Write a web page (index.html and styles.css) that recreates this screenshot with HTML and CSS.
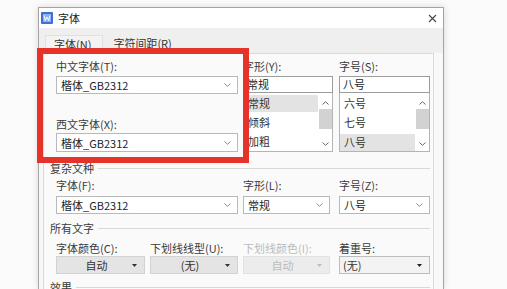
FILE: index.html
```html
<!DOCTYPE html>
<html lang="zh-CN">
<head>
<meta charset="utf-8">
<title>字体</title>
<link rel="stylesheet" href="styles.css">
</head>
<body>
<div class="dialog">
  <div class="titlebar">
    <svg class="app-icon" width="12" height="12" viewBox="0 0 12 12">
      <rect x="0" y="0" width="12" height="12" rx="1" fill="#3f6fd2"/>
      <rect x="2" y="2" width="8" height="8" fill="#8fb0ee"/>
      <path d="M3 3.5 L4.3 8.5 L6 5 L7.7 8.5 L9 3.5" fill="none" stroke="#fff" stroke-width="1"/>
    </svg>
    <span class="title">字体</span>
    <span class="close">
      <svg width="9" height="9" viewBox="0 0 9 9"><path d="M1 1 L8 8 M8 1 L1 8" stroke="#444" stroke-width="1.1"/></svg>
    </span>
  </div>
  <div class="tabstrip">
    <div class="tab active">字体(N)</div>
    <div class="tab">字符间距(R)</div>
  </div>
  <div class="panel">
    <div class="top-row">
      <div class="col-a">
        <div class="label">中文字体(T):</div>
        <div class="select sel-1"><span>楷体_GB2312</span><svg class="chev" width="7" height="4" viewBox="0 0 7 4"><path d="M0.5 0.5 L3.5 3.3 L6.5 0.5" fill="none" stroke="#8a8a8a" stroke-width="1"/></svg></div>
        <div class="label label-2">西文字体(X):</div>
        <div class="select sel-2"><span>楷体_GB2312</span><svg class="chev" width="7" height="4" viewBox="0 0 7 4"><path d="M0.5 0.5 L3.5 3.3 L6.5 0.5" fill="none" stroke="#8a8a8a" stroke-width="1"/></svg></div>
      </div>
      <div class="col-b">
        <div class="label">字形(Y):</div>
        <div class="input">常规</div>
        <div class="list">
          <div class="items">
            <div class="item selected">常规</div>
            <div class="item">倾斜</div>
            <div class="item">加粗</div>
          </div>
          <div class="scrollbar">
            <svg class="sarrow" width="7" height="4" viewBox="0 0 7 4"><path d="M0.5 3.5 L3.5 0.7 L6.5 3.5" fill="none" stroke="#666" stroke-width="1"/></svg>
            <div class="thumb"></div>
            <svg class="sarrow" width="7" height="4" viewBox="0 0 7 4"><path d="M0.5 0.5 L3.5 3.3 L6.5 0.5" fill="none" stroke="#666" stroke-width="1"/></svg>
          </div>
        </div>
      </div>
      <div class="col-c">
        <div class="label">字号(S):</div>
        <div class="input">八号</div>
        <div class="list">
          <div class="items">
            <div class="item">六号</div>
            <div class="item">七号</div>
            <div class="item selected">八号</div>
          </div>
          <div class="scrollbar">
            <svg class="sarrow" width="7" height="4" viewBox="0 0 7 4"><path d="M0.5 3.5 L3.5 0.7 L6.5 3.5" fill="none" stroke="#666" stroke-width="1"/></svg>
            <div class="thumb"></div>
            <svg class="sarrow" width="7" height="4" viewBox="0 0 7 4"><path d="M0.5 0.5 L3.5 3.3 L6.5 0.5" fill="none" stroke="#666" stroke-width="1"/></svg>
          </div>
        </div>
      </div>
    </div>

    <div class="section">复杂文种</div>
    <div class="mid-row">
      <div class="cell c1">
        <div class="label">字体(F):</div>
        <div class="select"><span>楷体_GB2312</span><svg class="chev" width="7" height="4" viewBox="0 0 7 4"><path d="M0.5 0.5 L3.5 3.3 L6.5 0.5" fill="none" stroke="#8a8a8a" stroke-width="1"/></svg></div>
      </div>
      <div class="cell c2">
        <div class="label">字形(L):</div>
        <div class="select"><span>常规</span><svg class="chev" width="7" height="4" viewBox="0 0 7 4"><path d="M0.5 0.5 L3.5 3.3 L6.5 0.5" fill="none" stroke="#8a8a8a" stroke-width="1"/></svg></div>
      </div>
      <div class="cell c3">
        <div class="label">字号(Z):</div>
        <div class="select"><span>八号</span><svg class="chev" width="7" height="4" viewBox="0 0 7 4"><path d="M0.5 0.5 L3.5 3.3 L6.5 0.5" fill="none" stroke="#8a8a8a" stroke-width="1"/></svg></div>
      </div>
    </div>

    <div class="section section-2">所有文字</div>
    <div class="btn-row">
      <div class="cell b1">
        <div class="label">字体颜色(C):</div>
        <div class="button"><span class="btext">自动</span><svg class="tri" width="5" height="3" viewBox="0 0 5 3"><path d="M0 0 H5 L2.5 3 Z" fill="#333"/></svg></div>
      </div>
      <div class="cell b2">
        <div class="label">下划线线型(U):</div>
        <div class="button"><span class="btext">(无)</span><svg class="tri" width="5" height="3" viewBox="0 0 5 3"><path d="M0 0 H5 L2.5 3 Z" fill="#333"/></svg></div>
      </div>
      <div class="cell b3">
        <div class="label disabled">下划线颜色(I):</div>
        <div class="button button-disabled"><span class="btext">自动</span><svg class="tri" width="5" height="3" viewBox="0 0 5 3"><path d="M0 0 H5 L2.5 3 Z" fill="#bdbdbd"/></svg></div>
      </div>
      <div class="cell b4">
        <div class="label">着重号:</div>
        <div class="button button-left"><span class="btext">(无)</span><svg class="tri" width="5" height="3" viewBox="0 0 5 3"><path d="M0 0 H5 L2.5 3 Z" fill="#222"/></svg></div>
      </div>
    </div>

    <div class="section section-3">效果</div>
  </div>
</div>
<div class="highlight"></div>
</body>
</html>
```
FILE: styles.css
```css
html, body {
  margin: 0;
  padding: 0;
}
body {
  width: 507px;
  height: 289px;
  overflow: hidden;
  position: relative;
  background: #fbfbfb;
  font-family: "Noto Sans CJK SC", "Noto Sans", sans-serif;
  font-size: 11px;
  color: #333;
}
.dialog {
  box-sizing: border-box;
  margin: 7px 0 0 38px;
  width: 406px;
  height: 282px;
  overflow: hidden;
  border: 1px solid #a4a4a4;
  border-bottom: none;
  background: #f8f8f8;
  box-shadow: 0 0 7px rgba(0, 0, 0, 0.14);
  display: flex;
  flex-direction: column;
}
.titlebar {
  height: 20px;
  background: #fff;
  display: flex;
  align-items: center;
  padding-left: 2px;
  flex-shrink: 0;
}
.app-icon {
  display: block;
  flex-shrink: 0;
}
.title {
  margin-left: 5px;
  color: #222;
  line-height: 14px;
}
.close {
  margin-left: auto;
  width: 20px;
  height: 20px;
  display: flex;
  align-items: center;
  justify-content: center;
  margin-right: 1px;
}
.close svg { display: block; }
.tabstrip {
  height: 25px;
  background: #efefef;
  display: flex;
  align-items: flex-end;
  padding-left: 6px;
  flex-shrink: 0;
}
.tab {
  height: 18px;
  line-height: 17px;
  padding: 0 10px 0 8px;
  color: #333;
  box-sizing: border-box;
}
.tab.active {
  padding: 0 11px 0 8px;
  border: 1px solid #e0e0e0;
  border-bottom: none;
  background: #f3f3f3;
}
.tab + .tab {
  padding-left: 10px;
}
.panel {
  box-sizing: border-box;
  margin-left: 4px;
  width: 391px;
  flex: 1;
  overflow: hidden;
  border: 1px solid #dadada;
  border-bottom: none;
  background: #fafafa;
  padding: 5px 3px 0 12px;
}
.label {
  height: 14px;
  line-height: 14px;
  white-space: nowrap;
  color: #3a3a3a;
}
.label.disabled { color: #bcbcbc; }
.select {
  box-sizing: border-box;
  height: 18px;
  border: 1px solid #b9b9b9;
  background: #fff;
  display: flex;
  align-items: center;
  justify-content: space-between;
  padding: 0 6px 0 4px;
  white-space: nowrap;
  color: #222;
}
.chev { display: block; flex-shrink: 0; }
.top-row {
  display: flex;
}
.col-a { width: 182px; }
.col-b { width: 90px; margin-left: 5px; }
.col-c { width: 91px; margin-left: 6px; }
.sel-1 { margin-top: 3px; }
.label-2 { margin-top: 23px; }
.sel-2 { margin-top: 2px; height: 19px; }
.input {
  box-sizing: border-box;
  margin-top: 3px;
  height: 17px;
  border: 1px solid #9c9c9c;
  background: #fff;
  line-height: 15px;
  padding-left: 3px;
  color: #222;
}
.list {
  box-sizing: border-box;
  height: 59px;
  border: 1px solid #b4b4b4;
  border-top: none;
  background: #fff;
  display: flex;
  padding-top: 2px;
}
.items {
  flex: 1;
}
.item {
  height: 19px;
  line-height: 17px;
  padding-left: 4px;
  color: #333;
}
.item.selected {
  background: #e3e3e3;
  height: 17px;
  margin-bottom: 2px;
}
.item.selected:last-child { margin-top: 1px; }
.scrollbar {
  width: 14px;
  display: flex;
  flex-direction: column;
  align-items: center;
  padding: 6px 0 5px;
  box-sizing: border-box;
}
.sarrow { display: block; flex-shrink: 0; }
.thumb {
  width: 13px;
  height: 20px;
  background: #d2d2d2;
  margin: 4px 0 auto;
}
.section {
  margin-top: 9px;
  margin-left: -6px;
  height: 14px;
  line-height: 14px;
  display: flex;
  align-items: center;
  color: #3a3a3a;
  white-space: nowrap;
}
.section::after {
  content: "";
  flex: 1;
  height: 1px;
  background: #d9d9d9;
  margin-left: 4px;
}
.section-2 { margin-top: 7px; }
.section-3 { margin-top: 6px; }
.mid-row,
.btn-row {
  display: flex;
}
.mid-row { margin-top: 3px; }
.mid-row .select { margin-top: 4px; }
.c1 { width: 182px; }
.c2 { width: 87px; margin-left: 5px; }
.c3 { width: 91px; margin-left: 9px; }
.btn-row { margin-top: 6px; }
.b1 { width: 89px; }
.b2 { width: 88px; margin-left: 5px; }
.b3 { width: 87px; margin-left: 5px; }
.b4 { width: 91px; margin-left: 9px; }
.button {
  box-sizing: border-box;
  margin-top: 1px;
  height: 18px;
  border: 1px solid #d2d2d2;
  background: #e4e4e4;
  display: flex;
  align-items: center;
  color: #333;
}
.btext {
  flex: 1;
  text-align: center;
  padding-left: 4px;
}
.tri {
  display: block;
  flex-shrink: 0;
  margin-right: 7px;
}
.button-disabled {
  background: #ececec;
  border-color: #e2e2e2;
  color: #bdbdbd;
}
.button-left {
  background: #f3f3f3;
  border-color: #bdbdbd;
}
.button-left .btext {
  text-align: left;
  padding-left: 3px;
}
.highlight {
  position: absolute;
  left: 37px;
  top: 48px;
  width: 212px;
  height: 115px;
  box-sizing: border-box;
  border: 6px solid #e5332a;
  pointer-events: none;
}
```
